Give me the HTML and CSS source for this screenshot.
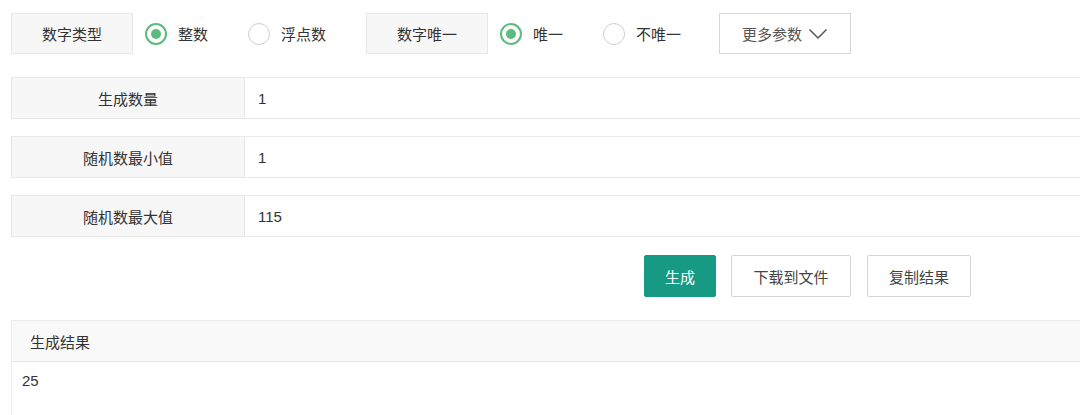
FILE: index.html
```html
<!DOCTYPE html>
<html lang="zh-CN">
<head>
<meta charset="utf-8">
<title>随机数生成</title>
<link rel="stylesheet" href="styles.css">
</head>
<body>
<div class="page">
  <div class="options">
    <div class="opt-label">数字类型</div>
    <div class="radios">
      <label class="radio checked"><span class="circle"></span><span>整数</span></label>
      <label class="radio"><span class="circle"></span><span>浮点数</span></label>
    </div>
    <div class="opt-label">数字唯一</div>
    <div class="radios">
      <label class="radio checked"><span class="circle"></span><span>唯一</span></label>
      <label class="radio"><span class="circle"></span><span>不唯一</span></label>
    </div>
    <button class="more">更多参数
      <svg class="chev" width="20" height="12" viewBox="0 0 20 12"><path d="M1.5 1.5 L10 10 L18.5 1.5" fill="none" stroke="#555" stroke-width="1.5"/></svg>
    </button>
  </div>

  <div class="field">
    <div class="field-label">生成数量</div>
    <div class="field-value">1</div>
  </div>
  <div class="field">
    <div class="field-label">随机数最小值</div>
    <div class="field-value">1</div>
  </div>
  <div class="field">
    <div class="field-label">随机数最大值</div>
    <div class="field-value">115</div>
  </div>

  <div class="actions">
    <button class="btn primary">生成</button>
    <button class="btn">下载到文件</button>
    <button class="btn">复制结果</button>
  </div>

  <div class="result">
    <div class="result-head">生成结果</div>
    <div class="result-body">25</div>
  </div>
</div>
</body>
</html>
```
FILE: styles.css
```css
* { box-sizing: border-box; }
html, body {
  margin: 0;
  padding: 0;
  background: #fff;
  overflow: hidden;
}
body {
  font-family: "Liberation Sans", "Noto Sans CJK SC", sans-serif;
  font-size: 15px;
  color: #333;
  width: 1080px;
  height: 415px;
}
.page {
  padding: 13px 0 0 11px;
  width: 1080px;
  height: 415px;
}
.options {
  display: flex;
  align-items: center;
  height: 41px;
}
.opt-label {
  width: 122px;
  height: 41px;
  background: #f7f7f7;
  border: 1px solid #e8e8e8;
  display: flex;
  align-items: center;
  justify-content: center;
  margin-right: 12px;
}
.radios {
  display: flex;
  align-items: center;
  gap: 40px;
  margin-right: 40px;
}
.radio {
  display: flex;
  align-items: center;
  gap: 11px;
}
.circle {
  width: 22px;
  height: 22px;
  border-radius: 50%;
  border: 1.5px solid #cfcfcf;
  display: flex;
  align-items: center;
  justify-content: center;
}
.radio.checked .circle {
  border: 2px solid #5dbb7e;
}
.radio.checked .circle::after {
  content: "";
  width: 10px;
  height: 10px;
  border-radius: 50%;
  background: #5dbb7e;
}
.more {
  width: 132px;
  height: 41px;
  border: 1px solid #d6d6d6;
  background: #fff;
  font: inherit;
  color: #555;
  display: flex;
  align-items: center;
  justify-content: center;
  gap: 6px;
  padding: 0;
  margin-left: -2px;
}
.chev { display: block; }

.field {
  display: flex;
  height: 42px;
  border: 1px solid #e8e8e8;
  border-right: none;
  margin-top: 23px;
}
.field + .field { margin-top: 17px; }
.field-label {
  width: 233px;
  background: #f7f7f7;
  border-right: 1px solid #e8e8e8;
  display: flex;
  align-items: center;
  justify-content: center;
}
.field-value {
  flex: 1;
  display: flex;
  align-items: center;
  padding-left: 13px;
}

.actions {
  display: flex;
  gap: 15px;
  margin-top: 18px;
  padding-left: 633px;
}
.btn {
  height: 42px;
  border: 1px solid #d6d6d6;
  border-radius: 2px;
  background: #fff;
  font: inherit;
  color: #444;
  padding: 0;
}
.btn:nth-child(2) { width: 120px; }
.btn:nth-child(3) { width: 104px; margin-left: 1px; }
.btn.primary {
  width: 72px;
  background: #179a83;
  border-color: #179a83;
  color: #fff;
}

.result {
  margin-top: 23px;
  border: 1px solid #ececec;
  border-right: none;
  border-bottom: none;
  height: 95px;
}
.result-head {
  height: 41px;
  background: #f9f9f9;
  border-bottom: 1px solid #e6e6e6;
  display: flex;
  align-items: center;
  padding-left: 18px;
}
.result-body {
  padding: 9px 0 0 10px;
  line-height: 20px;
}
```
